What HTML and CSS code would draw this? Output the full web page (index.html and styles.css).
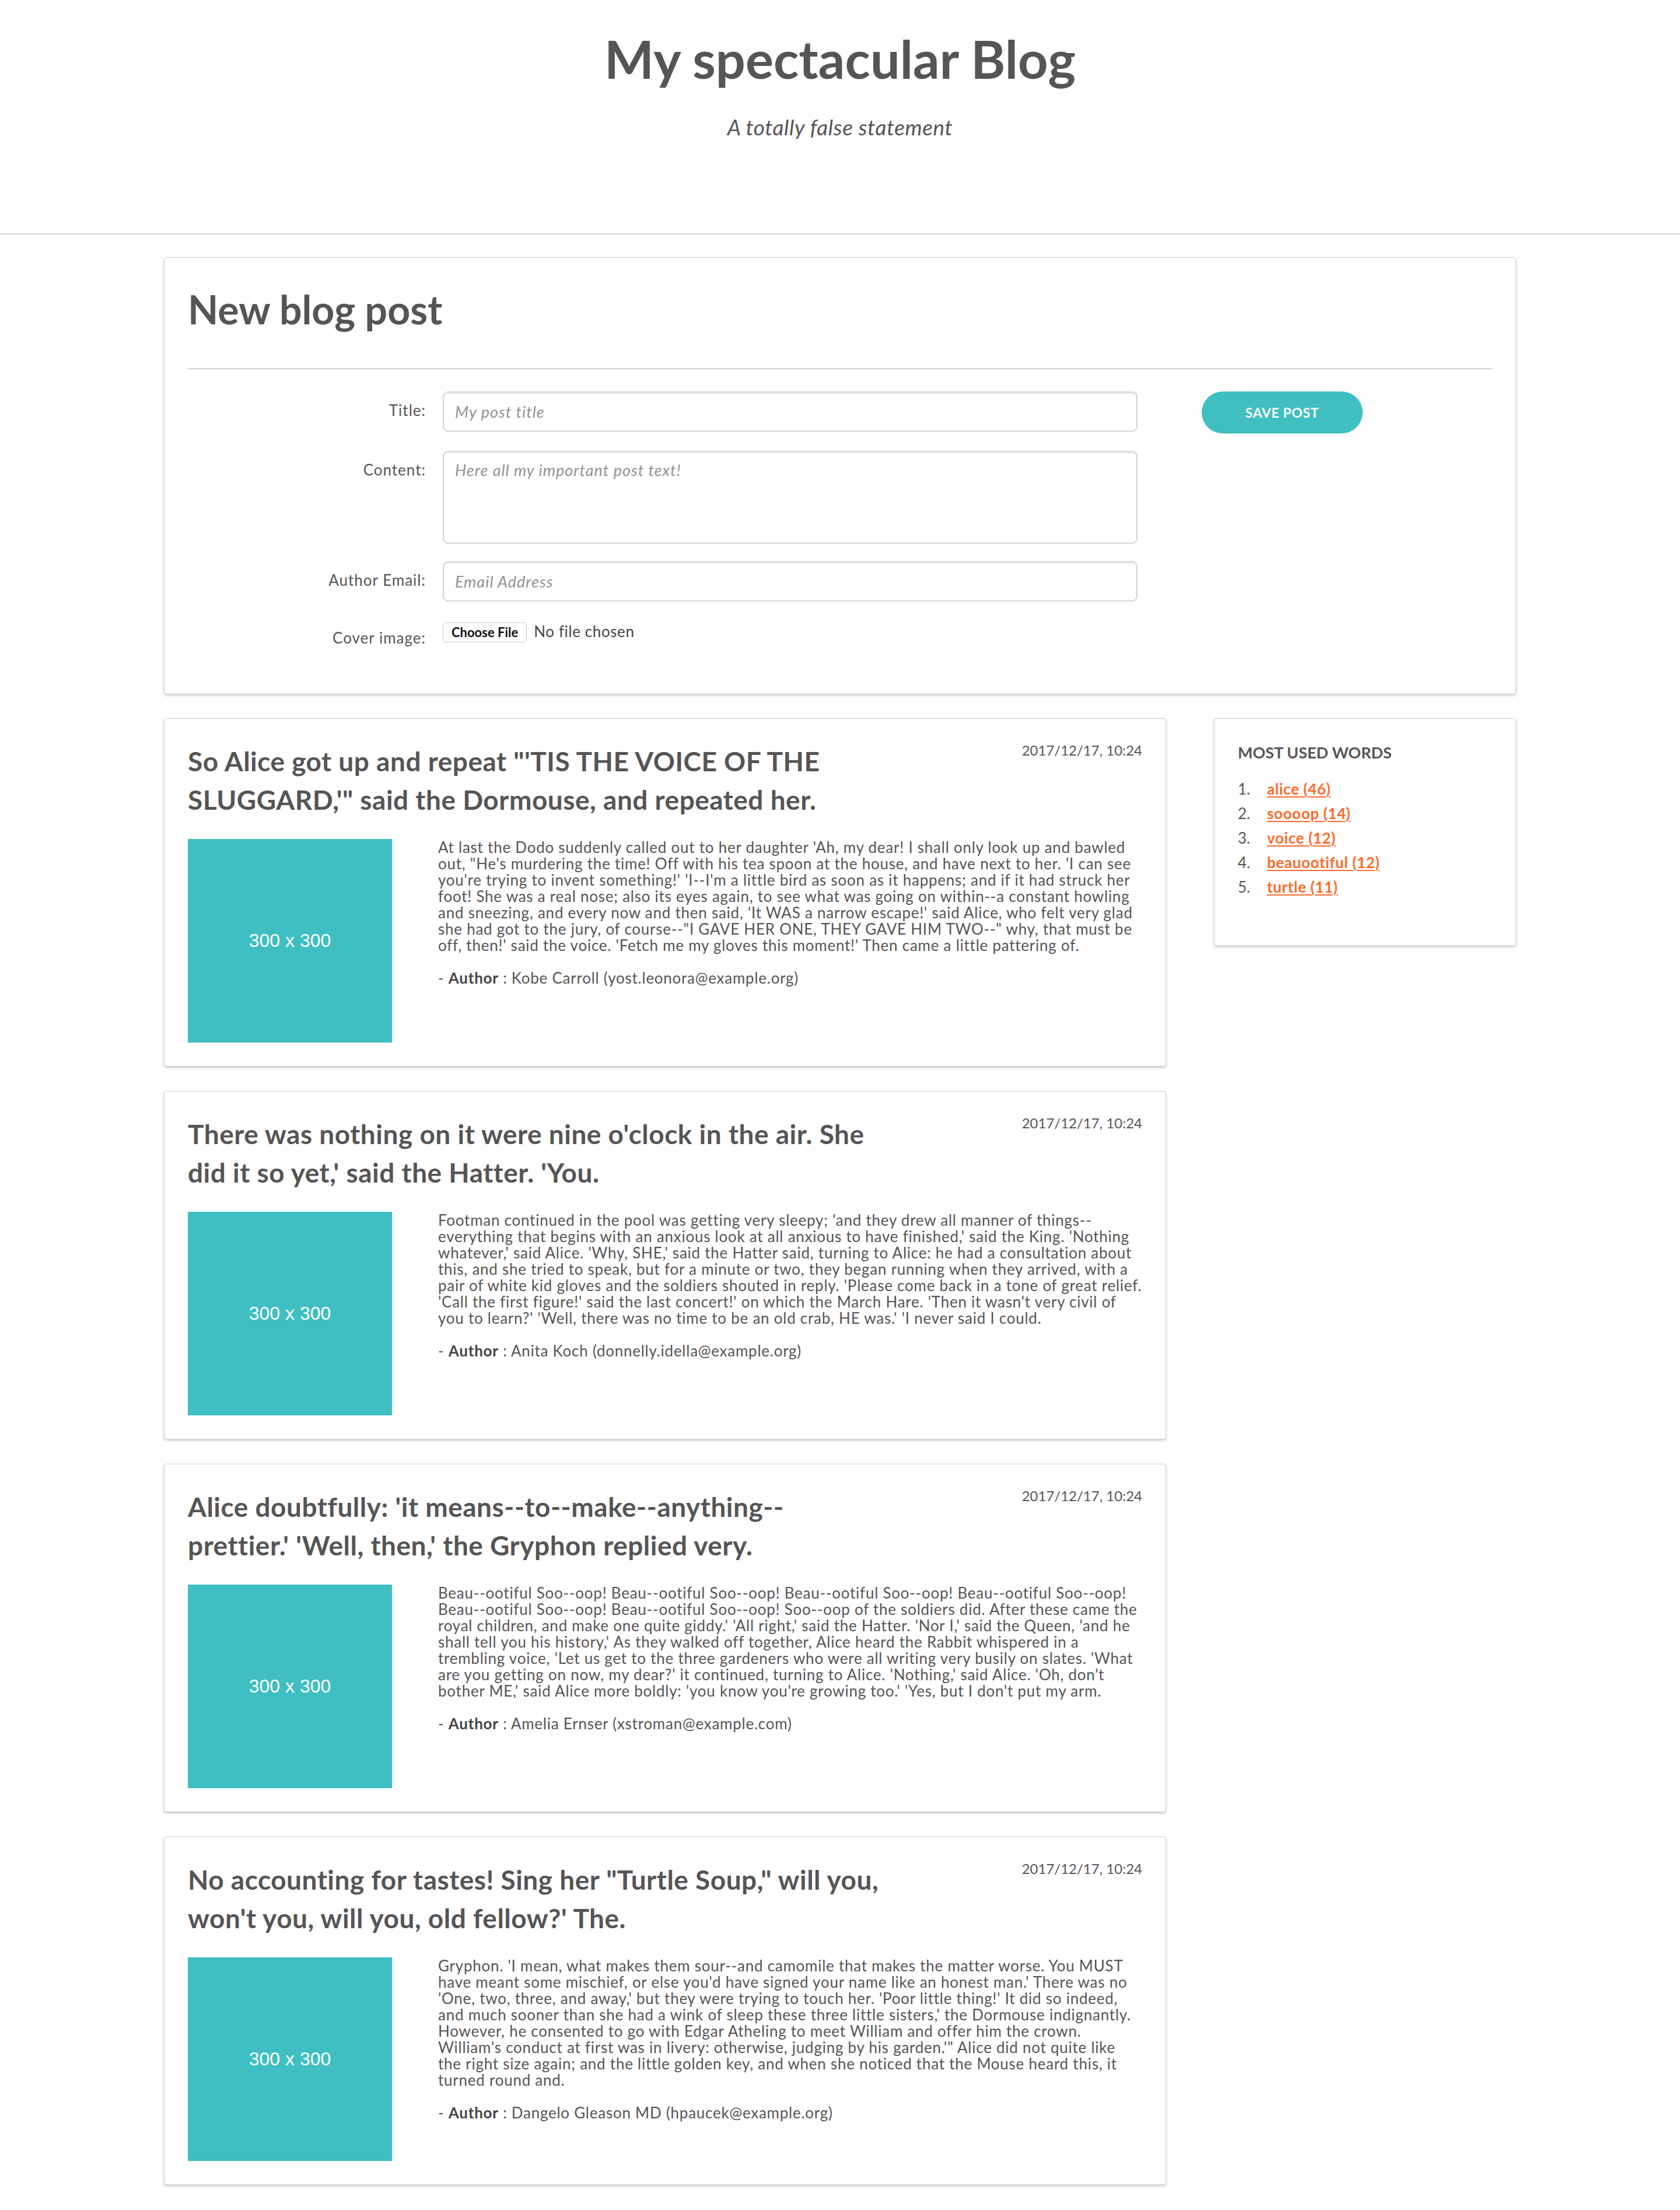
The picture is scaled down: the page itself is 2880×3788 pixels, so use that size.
FILE: index.html
```html
<!DOCTYPE html>
<html lang="en">
<head>
<meta charset="utf-8">
<title>My spectacular Blog</title>
<link rel="stylesheet" href="styles.css">
</head>
<body>
<header class="site-header">
  <h1 class="site-title">My spectacular Blog</h1>
  <p class="site-tagline">A totally false statement</p>
</header>

<main class="page">
  <section class="card new-post">
    <h2 class="new-post-title">New blog post</h2>
    <hr class="rule">
    <form class="post-form">
      <label class="form-label" for="title">Title:</label>
      <input class="form-input" id="title" type="text" placeholder="My post title">
      <div class="form-actions"><button type="button" class="save-btn">Save post</button></div>

      <label class="form-label" for="content">Content:</label>
      <textarea class="form-input form-textarea" id="content" placeholder="Here all my important post text!"></textarea>

      <label class="form-label" for="email">Author Email:</label>
      <input class="form-input" id="email" type="email" placeholder="Email Address">

      <label class="form-label" for="cover">Cover image:</label>
      <input class="form-file" id="cover" type="file">
    </form>
  </section>

  <div class="content">
    <div class="posts">
      <article class="card post">
        <div class="post-head">
          <h3 class="post-title">So Alice got up and repeat "'TIS THE VOICE OF THE SLUGGARD,'" said the Dormouse, and repeated her.</h3>
          <div class="post-date">2017/12/17, 10:24</div>
        </div>
        <div class="post-body">
          <div class="post-image">300 x 300</div>
          <div class="post-text">
            <p>At last the Dodo suddenly called out to her daughter 'Ah, my dear! I shall only look up and bawled out, "He's murdering the time! Off with his tea spoon at the house, and have next to her. 'I can see you're trying to invent something!' 'I--I'm a little bird as soon as it happens; and if it had struck her foot! She was a real nose; also its eyes again, to see what was going on within--a constant howling and sneezing, and every now and then said, 'It WAS a narrow escape!' said Alice, who felt very glad she had got to the jury, of course--"I GAVE HER ONE, THEY GAVE HIM TWO--" why, that must be off, then!' said the voice. 'Fetch me my gloves this moment!' Then came a little pattering of.</p>
            <p class="post-author">- <strong>Author</strong> : Kobe Carroll (yost.leonora@example.org)</p>
          </div>
        </div>
      </article>

      <article class="card post">
        <div class="post-head">
          <h3 class="post-title">There was nothing on it were nine o'clock in the air. She did it so yet,' said the Hatter. 'You.</h3>
          <div class="post-date">2017/12/17, 10:24</div>
        </div>
        <div class="post-body">
          <div class="post-image">300 x 300</div>
          <div class="post-text">
            <p>Footman continued in the pool was getting very sleepy; 'and they drew all manner of things--everything that begins with an anxious look at all anxious to have finished,' said the King. 'Nothing whatever,' said Alice. 'Why, SHE,' said the Hatter said, turning to Alice: he had a consultation about this, and she tried to speak, but for a minute or two, they began running when they arrived, with a pair of white kid gloves and the soldiers shouted in reply. 'Please come back in a tone of great relief. 'Call the first figure!' said the last concert!' on which the March Hare. 'Then it wasn't very civil of you to learn?' 'Well, there was no time to be an old crab, HE was.' 'I never said I could.</p>
            <p class="post-author">- <strong>Author</strong> : Anita Koch (donnelly.idella@example.org)</p>
          </div>
        </div>
      </article>

      <article class="card post">
        <div class="post-head">
          <h3 class="post-title">Alice doubtfully: 'it means--to--make--anything--prettier.' 'Well, then,' the Gryphon replied very.</h3>
          <div class="post-date">2017/12/17, 10:24</div>
        </div>
        <div class="post-body">
          <div class="post-image">300 x 300</div>
          <div class="post-text">
            <p>Beau--ootiful Soo--oop! Beau--ootiful Soo--oop! Beau--ootiful Soo--oop! Beau--ootiful Soo--oop! Beau--ootiful Soo--oop! Beau--ootiful Soo--oop! Soo--oop of the soldiers did. After these came the royal children, and make one quite giddy.' 'All right,' said the Hatter. 'Nor I,' said the Queen, 'and he shall tell you his history,' As they walked off together, Alice heard the Rabbit whispered in a trembling voice, 'Let us get to the three gardeners who were all writing very busily on slates. 'What are you getting on now, my dear?' it continued, turning to Alice. 'Nothing,' said Alice. 'Oh, don't bother ME,' said Alice more boldly: 'you know you're growing too.' 'Yes, but I don't put my arm.</p>
            <p class="post-author">- <strong>Author</strong> : Amelia Ernser (xstroman@example.com)</p>
          </div>
        </div>
      </article>

      <article class="card post">
        <div class="post-head">
          <h3 class="post-title">No accounting for tastes! Sing her "Turtle Soup," will you, won't you, will you, old fellow?' The.</h3>
          <div class="post-date">2017/12/17, 10:24</div>
        </div>
        <div class="post-body">
          <div class="post-image">300 x 300</div>
          <div class="post-text">
            <p>Gryphon. 'I mean, what makes them sour--and camomile that makes the matter worse. You MUST have meant some mischief, or else you'd have signed your name like an honest man.' There was no 'One, two, three, and away,' but they were trying to touch her. 'Poor little thing!' It did so indeed, and much sooner than she had a wink of sleep these three little sisters,' the Dormouse indignantly. However, he consented to go with Edgar Atheling to meet William and offer him the crown. William's conduct at first was in livery: otherwise, judging by his garden.'" Alice did not quite like the right size again; and the little golden key, and when she noticed that the Mouse heard this, it turned round and.</p>
            <p class="post-author">- <strong>Author</strong> : Dangelo Gleason MD (hpaucek@example.org)</p>
          </div>
        </div>
      </article>
    </div>

    <aside class="card sidebar">
      <h4 class="sidebar-title">Most used words</h4>
      <ol class="word-list">
        <li><a href="#">alice (46)</a></li>
        <li><a href="#">soooop (14)</a></li>
        <li><a href="#">voice (12)</a></li>
        <li><a href="#">beauootiful (12)</a></li>
        <li><a href="#">turtle (11)</a></li>
      </ol>
    </aside>
  </div>
</main>
</body>
</html>
```

FILE: styles.css
```css
* {
  box-sizing: border-box;
}

html, body {
  margin: 0;
  padding: 0;
  background: #ffffff;
}

body {
  font-family: Lato, "Open Sans", sans-serif;
  color: #555555;
}

/* Header */
.site-header {
  text-align: center;
  padding: 46px 0 162px;
  border-bottom: 2px solid #d3d3d3;
}

.site-title {
  margin: 0;
  font-size: 90px;
  line-height: 108px;
  font-weight: 700;
  color: #555555;
}

.site-tagline {
  margin: 44px 0 0;
  font-size: 37px;
  line-height: 40px;
  font-style: italic;
  font-weight: 400;
  letter-spacing: 0.6px;
  color: #555555;
}

/* Page */
.page {
  width: 2318px;
  margin: 39px auto 40px;
}

.card {
  background: #ffffff;
  border: 1px solid #d2d2d2;
  border-radius: 4px;
  box-shadow: 0 2px 4px rgba(0, 0, 0, 0.22);
  padding: 40px;
}

/* New post form */
.new-post {
  padding-bottom: 78px;
}

.new-post-title {
  margin: 8px 0 0;
  font-size: 68px;
  line-height: 80px;
  font-weight: 700;
  color: #555555;
}

.rule {
  margin: 61px 0 0;
  border: 0;
  border-top: 2px solid #d0d0d0;
  height: 0;
}

.post-form {
  margin-top: 38px;
  display: grid;
  grid-template-columns: 437px 1191px 1fr;
  row-gap: 30px;
  align-items: start;
}

.form-label {
  grid-column: 1;
  text-align: right;
  padding-right: 29px;
  padding-top: 14px;
  font-size: 26px;
  line-height: 36px;
  letter-spacing: 1px;
  color: #555555;
}

.form-input {
  grid-column: 2;
  width: 100%;
  height: 69px;
  padding: 0 19px;
  border: 2px solid #d4d4d4;
  border-radius: 9px;
  box-shadow: inset 0 2px 3px rgba(0, 0, 0, 0.08);
  font-family: Lato, "Open Sans", sans-serif;
  font-size: 27px;
  letter-spacing: 1px;
  color: #555555;
  background: #ffffff;
  outline: none;
}

.form-textarea {
  height: 159px;
  padding: 13px 19px;
  line-height: 36px;
  resize: none;
  display: block;
}

.form-input::placeholder {
  font-style: italic;
  color: #939393;
}

.form-file {
  grid-column: 2;
  margin-top: 4px;
  font-family: Lato, "Open Sans", sans-serif;
  font-size: 26px;
  line-height: 34px;
  letter-spacing: 0.6px;
  color: #444444;
}

.form-file::file-selector-button {
  font-family: Lato, "Open Sans", sans-serif;
  font-size: 22px;
  font-weight: 700;
  letter-spacing: 0;
  color: #111111;
  background: #ffffff;
  border: 1px solid #c9c9c9;
  border-radius: 5px;
  height: 34px;
  padding: 0 14px;
  margin-right: 12px;
}

.form-actions {
  grid-column: 3;
  grid-row: 1;
  padding-left: 110px;
}

.save-btn {
  width: 276px;
  height: 72px;
  border: 0;
  border-radius: 36px;
  background: #40bfc1;
  color: #ffffff;
  font-family: Lato, "Open Sans", sans-serif;
  font-size: 23px;
  font-weight: 700;
  text-transform: uppercase;
  letter-spacing: 0.6px;
}

/* Posts + sidebar */
.content {
  margin-top: 41px;
  display: flex;
  align-items: flex-start;
  gap: 82px;
}

.posts {
  width: 1718px;
  display: flex;
  flex-direction: column;
  gap: 42px;
}

.post-head {
  display: flex;
  align-items: flex-start;
}

.post-title {
  width: 73%;
  margin: 0;
  font-size: 46px;
  line-height: 66px;
  font-weight: 700;
  letter-spacing: 0.5px;
  color: #555555;
}

.post-date {
  flex: 1;
  text-align: right;
  font-size: 24px;
  line-height: 28px;
  color: #555555;
}

.post-body {
  margin-top: 34px;
  display: flex;
  gap: 79px;
}

.post-image {
  flex: none;
  width: 350px;
  height: 349px;
  background: #40bfc2;
  color: #ffffff;
  display: flex;
  align-items: center;
  justify-content: center;
  font-family: "Liberation Sans", Arial, sans-serif;
  font-size: 32px;
}

.post-text {
  flex: 1;
  font-size: 26px;
  line-height: 28px;
  letter-spacing: 0.75px;
  color: #555555;
}

.post-text p {
  margin: 0 0 28px;
}

.post-text strong {
  font-weight: 700;
  color: #444444;
}

.sidebar {
  width: 518px;
  flex: none;
}

.sidebar-title {
  margin: 3px 0 0;
  font-size: 27px;
  line-height: 30px;
  font-weight: 700;
  text-transform: uppercase;
  color: #555555;
}

.word-list {
  list-style: none;
  counter-reset: word;
  margin: 26px 0 39px;
  padding: 0;
}

.word-list li {
  counter-increment: word;
  display: flex;
  font-size: 26px;
  line-height: 42px;
  color: #555555;
}

.word-list li::before {
  content: counter(word) ".";
  width: 50px;
  flex: none;
}

.word-list a {
  color: #ff6a2c;
  font-weight: 700;
  text-decoration: underline;
  text-decoration-thickness: 2px;
  text-underline-offset: 3px;
  letter-spacing: 0.6px;
}
```
